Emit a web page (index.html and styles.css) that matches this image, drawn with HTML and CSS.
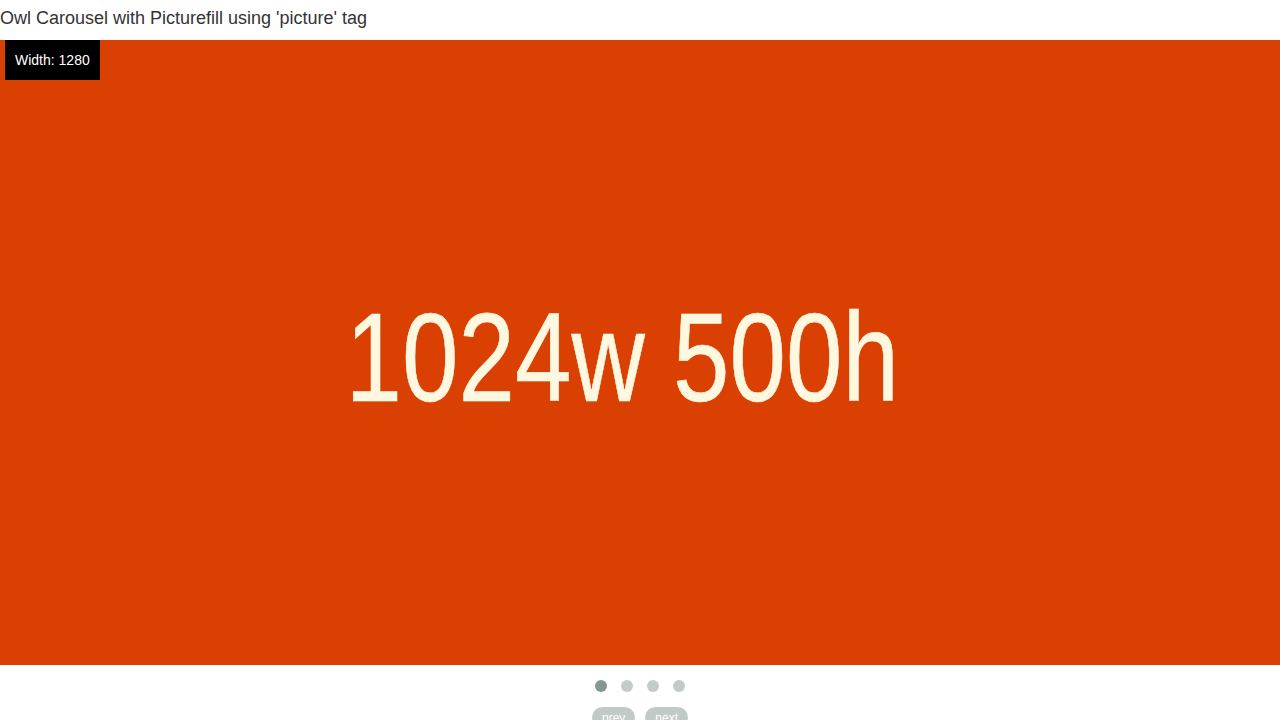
FILE: index.html
```
<!DOCTYPE html>
<html>
<head>
<meta charset="utf-8">
<link rel="stylesheet" href="styles.css">
</head>
<body>
<h1 class="title">Owl Carousel with Picturefill using 'picture' tag</h1>
<div class="carousel">
  <div class="slide">
    <span class="slide-text">1024w 500h</span>
  </div>
  <div class="width-label">Width: 1280</div>
</div>
<div class="controls">
  <div class="pagination">
    <span class="dot active"></span>
    <span class="dot"></span>
    <span class="dot"></span>
    <span class="dot"></span>
  </div>
  <div class="buttons">
    <div class="btn">prev</div>
    <div class="btn">next</div>
  </div>
</div>
</body>
</html>
```
FILE: styles.css
```
html, body {
  margin: 0;
  padding: 0;
  background: #fff;
  font-family: "Liberation Sans", Arial, sans-serif;
  overflow: hidden;
}
.title {
  margin: 0;
  height: 40px;
  line-height: 37px;
  font-size: 18px;
  font-weight: normal;
  color: #333;
}
.carousel {
  position: relative;
  height: 625px;
  background: #db4003;
}
.slide {
  height: 100%;
  display: flex;
  align-items: center;
  justify-content: center;
}
.slide-text {
  font-size: 126px;
  line-height: 1;
  color: #fff8e1;
  white-space: nowrap;
  -webkit-text-stroke: 0.6px #fff8e1;
  transform: translate(-18px, 5px) scaleX(0.806);
}
.width-label {
  position: absolute;
  left: 5px;
  top: 0;
  height: 40px;
  line-height: 40px;
  padding: 0 10px;
  background: #000;
  color: #fff;
  font-size: 14px;
}
.controls {
  margin-top: 10px;
  text-align: center;
}
.pagination {
  display: flex;
  justify-content: center;
}
.dot {
  display: block;
  width: 12px;
  height: 12px;
  margin: 5px 7px;
  border-radius: 20px;
  background: #869791;
  opacity: 0.5;
}
.dot.active {
  opacity: 1;
}
.buttons {
  display: flex;
  justify-content: center;
  gap: 10px;
  margin-top: 10px;
}
.btn {
  color: #fff;
  font-size: 12px;
  line-height: 14px;
  padding: 4px 10px 3px;
  border-radius: 30px;
  background: #869791;
  opacity: 0.5;
}
```
